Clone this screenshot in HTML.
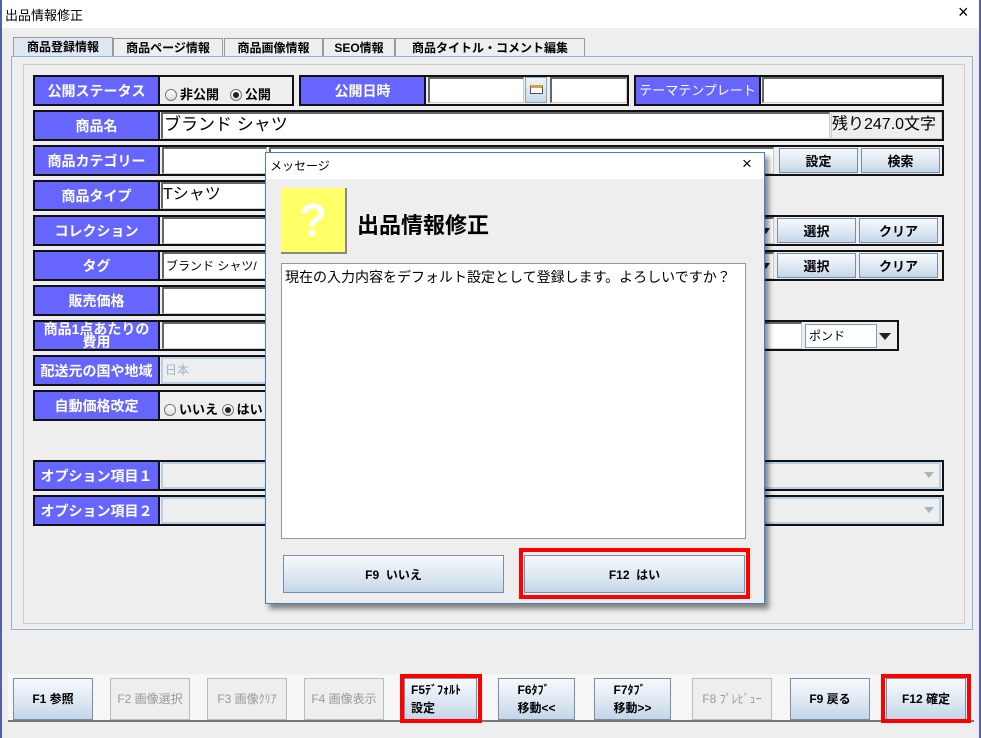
<!DOCTYPE html>
<html><head><meta charset="utf-8"><style>
*{box-sizing:border-box;margin:0;padding:0}
body{width:981px;height:738px;background:#eeeeee;font-family:"Liberation Sans","Noto Sans CJK JP",sans-serif;font-size:13px;position:relative;overflow:hidden}
.a{position:absolute}
.lb{position:absolute;background:#6666ff;color:#fff;font-weight:bold;font-size:14px;text-align:center;border:2px solid #111;display:flex;align-items:center;justify-content:center;line-height:14px;white-space:nowrap}
.bx{position:absolute;border:2px solid #111;border-left:none;background:#eee}
.in{position:absolute;background:#fff;border-top:2px solid #666;border-left:2px solid #666;border-right:1px solid #ccc;border-bottom:1px solid #ccc}
.dis{position:absolute;background:#eee;border:2px solid #b8cfe5}
.btn{position:absolute;background:linear-gradient(#f6f9fc,#dbe6f1 60%,#c4d6ea);border:1px solid #7a8ea3;font-weight:bold;font-size:13px;display:flex;align-items:center;justify-content:center}
.fb{position:absolute;top:678px;height:42px;width:80px;background:linear-gradient(#f6f9fc,#dbe6f1 60%,#c4d6ea);border:1px solid #7a8ea3;font-size:12px;font-weight:bold;display:flex;align-items:center;justify-content:center;line-height:18px}
.fb.d{background:#eee;color:#999;border-color:#bbb;font-weight:normal}
.red{position:absolute;border:4px solid #f00}
.tab{position:absolute;top:38px;height:19px;border:1px solid #999;border-bottom:none;background:#eee;font-weight:bold;font-size:12px;text-align:center;line-height:18px}
.rad{display:inline-block;width:12px;height:12px;border:1px solid #777;border-radius:50%;background:linear-gradient(#fff,#ddd);vertical-align:-2px;margin-right:3px;position:relative}
.rad.on::after{content:"";position:absolute;left:2px;top:2px;width:6px;height:6px;border-radius:50%;background:#222}
.arr{position:absolute;width:0;height:0;border-left:6px solid transparent;border-right:6px solid transparent;border-top:7px solid #222}
</style></head><body>
<div class="a" style="left:0;top:0;width:981px;height:28px;background:#fff"></div>
<div class="a" style="left:5px;top:5px;font-size:13px">出品情報修正</div>
<div class="a" style="left:958px;top:2px;font-size:18px">×</div>
<div class="a" style="left:0;top:0;width:2px;height:738px;background:#5560a0"></div>
<div class="a" style="left:979px;top:0;width:2px;height:738px;background:#5560a0"></div>

<div class="tab" style="left:13px;width:100px;background:#dde8f3;top:37px;height:20px">商品登録情報</div>
<div class="tab" style="left:113px;width:110px">商品ページ情報</div>
<div class="tab" style="left:224px;width:99px">商品画像情報</div>
<div class="tab" style="left:323px;width:72px">SEO情報</div>
<div class="tab" style="left:395px;width:190px">商品タイトル・コメント編集</div>
<div class="a" style="left:11px;top:56px;width:962px;height:574px;border:1px solid #8fb0d3"></div>
<div class="a" style="left:23px;top:64px;width:942px;height:560px;border:1px solid #ccc"></div>

<!-- row1 -->
<div class="lb" style="left:33px;top:75px;width:127px;height:31px">公開ステータス</div>
<div class="bx" style="left:160px;top:75px;width:134px;height:31px;font-weight:bold;padding:7px 0 0 5px"><span class="rad"></span>非公開 &nbsp; <span class="rad on"></span>公開</div>
<div class="lb" style="left:299px;top:75px;width:127px;height:31px">公開日時</div>
<div class="bx" style="left:426px;top:75px;width:203px;height:31px"></div>
<div class="in" style="left:428px;top:77px;width:96px;height:26px"></div>
<div class="a" style="left:525px;top:77px;width:22px;height:26px;background:linear-gradient(#eef3f8,#c9d9ea);border:1px solid #8aa"><div class="a" style="left:4px;top:7px;width:13px;height:9px;border:1px solid #555;border-top:3px solid #d4a040;background:#fff"></div></div>
<div class="in" style="left:550px;top:77px;width:77px;height:26px"></div>
<div class="lb" style="left:634px;top:75px;width:127px;height:31px;font-weight:normal;font-size:13px">テーマテンプレート</div>
<div class="bx" style="left:761px;top:75px;width:183px;height:31px"></div>
<div class="in" style="left:762px;top:77px;width:180px;height:26px"></div>
<!-- row2 -->
<div class="lb" style="left:33px;top:110px;width:127px;height:31px">商品名</div>
<div class="bx" style="left:160px;top:110px;width:784px;height:31px"></div>
<div class="in" style="left:161px;top:112px;width:669px;height:27px;font-size:17px;line-height:22px;padding-left:1px">ブランド シャツ</div>
<div class="a" style="left:831px;top:112px;width:111px;height:27px;border:1px solid #ccc;font-size:16px;line-height:24px">残り247.0文字</div>
<!-- row3 -->
<div class="lb" style="left:33px;top:145px;width:127px;height:31px">商品カテゴリー</div>
<div class="bx" style="left:160px;top:145px;width:784px;height:31px"></div>
<div class="in" style="left:162px;top:147px;width:105px;height:27px"></div>
<div class="in" style="left:269px;top:147px;width:505px;height:27px"></div>
<div class="btn" style="left:779px;top:148px;width:79px;height:25px">設定</div>
<div class="btn" style="left:861px;top:148px;width:79px;height:25px">検索</div>
<!-- row4 -->
<div class="lb" style="left:33px;top:180px;width:127px;height:31px">商品タイプ</div>
<div class="bx" style="left:160px;top:180px;width:110px;height:31px"></div>
<div class="in" style="left:161px;top:182px;width:108px;height:27px;font-size:16px;line-height:22px">Tシャツ</div>
<!-- row5,6 -->
<div class="lb" style="left:33px;top:215px;width:127px;height:31px">コレクション</div>
<div class="bx" style="left:160px;top:215px;width:784px;height:31px"></div>
<div class="in" style="left:162px;top:217px;width:612px;height:27px"></div>
<div class="arr" style="left:762px;top:228px;border-width:6px 4px 0 4px"></div>
<div class="btn" style="left:777px;top:218px;width:79px;height:25px">選択</div>
<div class="btn" style="left:859px;top:218px;width:79px;height:25px">クリア</div>
<div class="lb" style="left:33px;top:250px;width:127px;height:31px">タグ</div>
<div class="bx" style="left:160px;top:250px;width:784px;height:31px"></div>
<div class="in" style="left:162px;top:252px;width:612px;height:27px;font-size:12px;line-height:24px;padding-left:2px">ブランド シャツ/</div>
<div class="arr" style="left:762px;top:263px;border-width:6px 4px 0 4px"></div>
<div class="btn" style="left:777px;top:253px;width:79px;height:25px">選択</div>
<div class="btn" style="left:859px;top:253px;width:79px;height:25px">クリア</div>
<!-- row7 -->
<div class="lb" style="left:33px;top:285px;width:127px;height:31px">販売価格</div>
<div class="bx" style="left:160px;top:285px;width:110px;height:31px"></div>
<div class="in" style="left:162px;top:287px;width:108px;height:27px"></div>
<!-- row8 -->
<div class="lb" style="left:33px;top:320px;width:127px;height:31px;line-height:13px">商品1点あたりの<br>費用</div>
<div class="bx" style="left:160px;top:320px;width:739px;height:31px"></div>
<div class="in" style="left:162px;top:322px;width:640px;height:27px"></div>
<div class="a" style="left:805px;top:324px;width:72px;height:24px;background:#fff;border:1px solid #7a9cc0;font-size:12px;line-height:22px;padding-left:3px">ポンド</div>
<div class="arr" style="left:879px;top:333px"></div>
<!-- row9 -->
<div class="lb" style="left:33px;top:355px;width:127px;height:31px">配送元の国や地域</div>
<div class="bx" style="left:160px;top:355px;width:110px;height:31px"></div>
<div class="dis" style="left:161px;top:357px;width:108px;height:27px;color:#a0b4c8;font-size:12px;line-height:22px;padding-left:2px">日本</div>
<!-- row10 -->
<div class="lb" style="left:33px;top:390px;width:127px;height:31px">自動価格改定</div>
<div class="bx" style="left:160px;top:390px;width:110px;height:31px;font-weight:bold;padding:7px 0 0 4px;white-space:nowrap;overflow:hidden"><span class="rad"></span>いいえ <span class="rad on"></span>はい</div>
<!-- options -->
<div class="lb" style="left:33px;top:460px;width:127px;height:31px">オプション項目１</div>
<div class="bx" style="left:160px;top:460px;width:784px;height:31px"></div>
<div class="dis" style="left:161px;top:462px;width:780px;height:27px"></div>
<div class="arr" style="left:924px;top:472px;border-width:6px 5px 0 5px;border-top-color:#9bb"></div>
<div class="lb" style="left:33px;top:495px;width:127px;height:31px">オプション項目２</div>
<div class="bx" style="left:160px;top:495px;width:784px;height:31px"></div>
<div class="dis" style="left:161px;top:497px;width:780px;height:27px"></div>
<div class="arr" style="left:924px;top:507px;border-width:6px 5px 0 5px;border-top-color:#9bb"></div>

<!-- dialog -->
<div class="a" style="left:265px;top:152px;width:500px;height:452px;background:#eee;border:1px solid #3b7fd1;box-shadow:4px 5px 5px rgba(0,0,0,.45)"></div>
<div class="a" style="left:266px;top:153px;width:498px;height:26px;background:#fff"></div>
<div class="a" style="left:270px;top:157px;font-size:12px">メッセージ</div>
<div class="a" style="left:742px;top:154px;font-size:17px">×</div>
<div class="a" style="left:281px;top:188px;width:66px;height:66px;background:#ffff66;border-right:2px solid #888;border-bottom:2px solid #888;color:#fff;font-weight:bold;font-size:46px;text-align:center;line-height:64px">?</div>
<div class="a" style="left:357px;top:208px;font-size:22px;font-weight:bold">出品情報修正</div>
<div class="a" style="left:281px;top:263px;width:465px;height:276px;background:#fff;border:1px solid #8a9aaa;font-size:14px;padding:3px 3px">現在の入力内容をデフォルト設定として登録します。よろしいですか？</div>
<div class="btn" style="left:283px;top:555px;width:221px;height:38px;font-size:12px">F9 &nbsp;いいえ</div>
<div class="btn" style="left:524px;top:555px;width:221px;height:38px;font-size:12px">F12 &nbsp;はい</div>
<div class="red" style="left:519px;top:548px;width:231px;height:51px"></div>

<!-- bottom -->
<div class="a" style="left:8px;top:674px;width:966px;height:48px;background:#f6f6f6;border-bottom:2px solid #777"></div>
<div class="fb" style="left:13px">F1 参照</div>
<div class="fb d" style="left:110px">F2 画像選択</div>
<div class="fb d" style="left:207px">F3 画像ｸﾘｱ</div>
<div class="fb d" style="left:304px">F4 画像表示</div>
<div class="fb" style="left:404px;width:73px;justify-content:flex-start;padding-left:6px;text-align:left">F5ﾃﾞﾌｫﾙﾄ<br>設定</div>
<div class="fb" style="left:498px;width:77px">F6ﾀﾌﾞ<br>移動&lt;&lt;</div>
<div class="fb" style="left:594px;width:77px">F7ﾀﾌﾞ<br>移動&gt;&gt;</div>
<div class="fb d" style="left:692px">F8 ﾌﾟﾚﾋﾞｭｰ</div>
<div class="fb" style="left:790px">F9 戻る</div>
<div class="fb" style="left:886px">F12 確定</div>
<div class="red" style="left:400px;top:674px;width:82px;height:49px"></div>
<div class="red" style="left:881px;top:674px;width:90px;height:49px"></div>
</body></html>
